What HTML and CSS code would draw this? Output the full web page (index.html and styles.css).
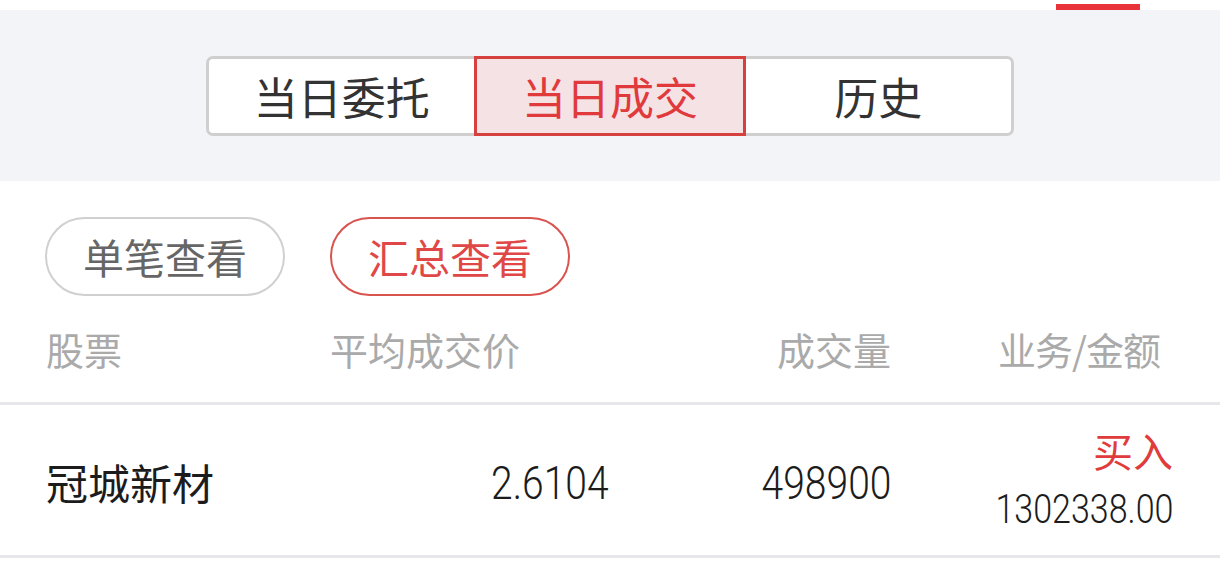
FILE: index.html
```html
<!DOCTYPE html>
<html>
	<head>
		<meta charset="utf-8">
		<title>当日成交</title>
		<link rel="stylesheet" href="styles.css">
	</head>
	<body>
		<!--顶部标签指示条-->
		<div class="topbar">
			<div class="indicator"></div>
		</div>

		<!--分段选择-->
		<div class="tabs">
			<div class="seg">
				<div class="seg-item first">当日委托</div>
				<div class="seg-item active">当日成交</div>
				<div class="seg-item last">历史</div>
			</div>
		</div>

		<div class="filters">
			<div class="pill">单笔查看</div>
			<div class="pill on">汇总查看</div>
		</div>

		<div class="grid head">
			<div>股票</div>
			<div>平均成交价</div>
			<div class="r">成交量</div>
			<div class="r pr">业务/金额</div>
		</div>

		<ul class="list">
			<li class="grid row">
				<div class="name">冠城新材</div>
				<div class="r"><span class="num">2.6104</span></div>
				<div class="r"><span class="num">498900</span></div>
				<div class="r">
					<div class="buy">买入</div>
					<div class="amt"><span class="num small">1302338.00</span></div>
				</div>
			</li>
		</ul>
	</body>
</html>
```

FILE: styles.css
```css
html,body{
	margin: 0;
	background: #ffffff;
	font-family: "Noto Sans CJK SC", "Noto Sans", sans-serif;
}
.topbar{
	height: 10px;
	display: flex;
	justify-content: flex-end;
	padding-right: 80px;
}
.indicator{
	width: 84px;
	height: 6px;
	margin-top: 4px;
	background: #e8333a;
}

.tabs{
	height: 171px;
	background: #f3f4f8;
	display: flex;
	justify-content: center;
	align-items: center;
}
.seg{
	display: flex;
	width: 808px;
	height: 80px;
}
.seg-item{
	flex: 1;
	display: flex;
	align-items: center;
	justify-content: center;
	background: #ffffff;
	border: 3px solid #cfcfcf;
	font-size: 44px;
	line-height: 1;
	color: #333333;
}
.seg-item.first{
	border-right: none;
	border-radius: 7px 0 0 7px;
}
.seg-item.last{
	border-left: none;
	border-radius: 0 7px 7px 0;
}
.seg-item.active{
	background: #f5e2e5;
	border-color: #d6413f;
	color: #e03a3c;
}

.filters{
	display: flex;
	gap: 45px;
	padding: 36px 45px 0;
}
.pill{
	width: 236px;
	height: 75px;
	border: 2px solid #d0d0d0;
	border-radius: 40px;
	display: flex;
	align-items: center;
	justify-content: center;
	font-size: 41px;
	line-height: 1;
	color: #666666;
}
.pill.on{
	border-color: #d9534f;
	color: #e04848;
}

.grid{
	display: grid;
	grid-template-columns: 284px 279px 282px 1fr;
	padding: 0 47px 0 46px;
	align-items: center;
}
.r{
	text-align: right;
}
.head{
	height: 106px;
	font-size: 38px;
	line-height: 1;
	color: #aaaaaa;
	border-bottom: 3px solid #e6e6eb;
}
.head .pr{
	padding-right: 13px;
	letter-spacing: -1px;
}

.list{
	list-style: none;
	margin: 0;
	padding: 0;
}
.row{
	height: 150px;
	border-bottom: 3px solid #e6e6eb;
	color: #1c1c1c;
}
.name{
	font-size: 42px;
	line-height: 1;
	padding-top: 4px;
}
/* 数字用窄体 */
.num{
	display: inline-block;
	font-family: Roboto, "DejaVu Sans", sans-serif;
	font-weight: 300;
	font-size: 47px;
	line-height: 1;
	padding-top: 4px;
	transform: scaleX(0.83);
	transform-origin: right center;
}
.num.small{
	font-size: 41px;
	padding-top: 0;
}
.buy{
	font-size: 40px;
	line-height: 1;
	color: #e03c3c;
}
.amt{
	margin-top: 19px;
}
```
